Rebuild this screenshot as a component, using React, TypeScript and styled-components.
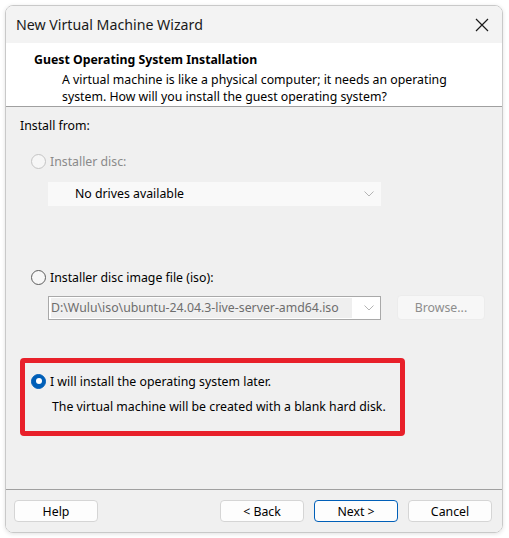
import styled, {createGlobalStyle} from "styled-components";

const GlobalStyle = createGlobalStyle`
  body {
    margin: 0;
    background: #ffffff;
    font-family: "Noto Sans", "Liberation Sans", sans-serif;
    font-size: 12.3px;
    color: #000;
  }
`;

const Window = styled.div`
  margin: 5px;
  width: 498px;
  height: 528px;
  box-sizing: border-box;
  border: 1px solid #c9c9c9;
  border-radius: 8px;
  overflow: hidden;
  display: flex;
  flex-direction: column;
  box-shadow: 0 1px 4px rgba(0, 0, 0, 0.12);
`;

const TitleBar = styled.header`
  height: 37px;
  flex: none;
  background: #f3f3f3;
  display: flex;
  align-items: center;
  justify-content: space-between;
  padding: 0 13px 0 10px;
`;

const Title = styled.span`
  font-size: 14.2px;
  color: #1a1a1a;
`;

const Header = styled.section`
  flex: none;
  height: 64px;
  box-sizing: border-box;
  background: #ffffff;
  border-bottom: 1px solid #a0a0a0;
  padding: 8px 0 0 28px;
`;

const HeaderTitle = styled.div`
  font-weight: bold;
  line-height: 17px;
`;

const HeaderText = styled.p`
  margin: 3px 0 0 28px;
  line-height: 17px;
  width: 410px;
`;

const Body = styled.main`
  flex: 1;
  background: #f0f0f0;
  padding: 11px 14px 0;
  display: flex;
  flex-direction: column;
  align-items: flex-start;
`;

const SectionLabel = styled.div`
  line-height: 16px;
`;

const RadioRow = styled.label<{ $top: number; $inset?: number; $disabled?: boolean }>`
  margin-top: ${p => p.$top}px;
  padding-left: ${p => p.$inset ?? 11}px;
  display: flex;
  align-items: center;
  gap: 4px;
  height: 16px;
  color: ${p => (p.$disabled ? "#8a8a8a" : "#000")};
`;

const Radio = styled.span<{ $checked?: boolean; $disabled?: boolean }>`
  width: 15px;
  height: 15px;
  box-sizing: border-box;
  border-radius: 50%;
  position: relative;
  flex: none;
  background: ${p => (p.$checked ? "#005fb8" : p.$disabled ? "#f6f6f6" : "#f7f7f7")};
  border: 1px solid ${p => (p.$checked ? "#005fb8" : p.$disabled ? "#c4c4c4" : "#5d5d5d")};

  &::after {
    content: "";
    display: ${p => (p.$checked ? "block" : "none")};
    position: absolute;
    left: 3.5px;
    top: 3.5px;
    width: 6px;
    height: 6px;
    border-radius: 50%;
    background: #ffffff;
  }
`;

const ComboRow = styled.div<{ $top: number }>`
  margin-top: ${p => p.$top}px;
  margin-left: 28px;
  display: flex;
  gap: 16px;
`;

const Combo = styled.div<{ $bordered?: boolean }>`
  width: 333px;
  height: 24px;
  box-sizing: border-box;
  display: flex;
  align-items: center;
  justify-content: space-between;
  background: ${p => (p.$bordered ? "#ffffff" : "#f9f9f9")};
  border: 1px solid ${p => (p.$bordered ? "#a9a9a9" : "#f9f9f9")};
  padding: 0 6px 0 2px;
`;

const ComboText = styled.span<{ $muted?: boolean; $indent?: number }>`
  padding-left: ${p => p.$indent ?? 0}px;
  color: ${p => (p.$muted ? "#6d6d6d" : "#000")};
  background: ${p => (p.$muted ? "#efefef" : "transparent")};
  line-height: 20px;
  flex: ${p => (p.$muted ? 1 : "none")};
  margin-right: ${p => (p.$muted ? 12 : 0)}px;
  white-space: nowrap;
  overflow: hidden;
`;

const BrowseButton = styled.button`
  width: 88px;
  height: 25px;
  margin-top: -1px;
  font: inherit;
  color: #8d8d8d;
  background: #f7f7f7;
  border: 1px solid #ececec;
  border-radius: 4px;
`;

const Highlight = styled.div`
  margin-top: 38px;
  width: 385px;
  height: 78px;
  box-sizing: border-box;
  border: 5px solid #e8202a;
  border-radius: 4px;
  padding-top: 10px;
`;

const RowNote = styled.div`
  margin: 10px 0 0 27px;
  line-height: 16px;
`;

const Footer = styled.footer`
  flex: none;
  height: 43px;
  box-sizing: border-box;
  border-top: 1px solid #a0a0a0;
  background: #f0f0f0;
  display: flex;
  align-items: flex-start;
  padding: 10px 10px 0 8px;
  gap: 10px;
`;

const Button = styled.button<{ $primary?: boolean }>`
  width: 84px;
  height: 22px;
  font: inherit;
  color: #000;
  background: #fdfdfd;
  border: 1px solid ${p => (p.$primary ? "#005fb8" : "#d5d5d5")};
  border-radius: 4px;
  padding: 0;
`;

const Spacer = styled.div`
  flex: 1;
`;

const Chevron = () => (
    <svg width="10" height="6" viewBox="0 0 10 6">
       <path d="M0.5 0.5 L5 5 L9.5 0.5" fill="none" stroke="#b4b4b4" strokeWidth="1"/>
    </svg>
);

const CloseIcon = () => (
    <svg width="14" height="14" viewBox="0 0 14 14">
       <path d="M1 1 L13 13 M13 1 L1 13" stroke="#1a1a1a" strokeWidth="1.2"/>
    </svg>
);

export default function App() {
   return (
       <>
          <GlobalStyle/>
          <Window>
             <TitleBar>
                <Title>New Virtual Machine Wizard</Title>
                <CloseIcon/>
             </TitleBar>

             <Header>
                <HeaderTitle>Guest Operating System Installation</HeaderTitle>
                <HeaderText>
                   A virtual machine is like a physical computer; it needs an operating
                   system. How will you install the guest operating system?
                </HeaderText>
             </Header>

             <Body>
                <SectionLabel>Install from:</SectionLabel>

                <RadioRow $top={19} $disabled>
                   <Radio $disabled/>
                   Installer disc:
                </RadioRow>
                <ComboRow $top={13}>
                   <Combo>
                      <ComboText $indent={24}>No drives available</ComboText>
                      <Chevron/>
                   </Combo>
                </ComboRow>

                <RadioRow $top={63}>
                   <Radio/>
                   Installer disc image file (iso):
                </RadioRow>
                <ComboRow $top={11}>
                   <Combo $bordered>
                      <ComboText $muted>D:\Wulu\iso\ubuntu-24.04.3-live-server-amd64.iso</ComboText>
                      <Chevron/>
                   </Combo>
                   <BrowseButton disabled>Browse...</BrowseButton>
                </ComboRow>

                <Highlight>
                   <RadioRow $top={0} $inset={6}>
                      <Radio $checked/>
                      I will install the operating system later.
                   </RadioRow>
                   <RowNote>The virtual machine will be created with a blank hard disk.</RowNote>
                </Highlight>
             </Body>

             <Footer>
                <Button>Help</Button>
                <Spacer/>
                <Button>&lt; Back</Button>
                <Button $primary>Next &gt;</Button>
                <Button>Cancel</Button>
             </Footer>
          </Window>
       </>
   );
}
